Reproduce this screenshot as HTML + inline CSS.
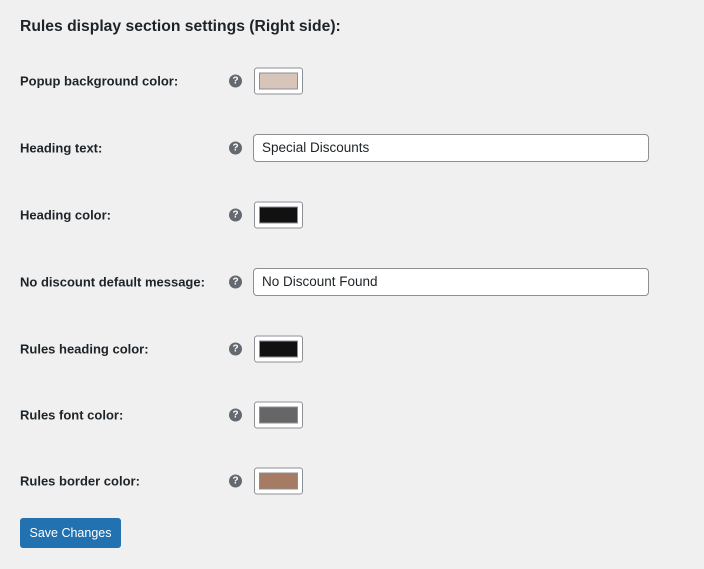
<!DOCTYPE html>
<html><head><style>
body{margin:0;width:704px;height:569px;background:#f0f0f1;font-family:"Liberation Sans",sans-serif;color:#1d2327;position:relative;overflow:hidden}
.t{position:absolute;left:20px;top:18px;font-size:15.7px;font-weight:600}
.l{position:absolute;left:20px;font-size:13px;font-weight:bold;color:#1d2327;transform:translateY(-50%)}
.h{position:absolute;left:229px;width:13px;height:13px;border-radius:50%;background:#646970;color:#fff;font-size:10px;font-weight:bold;text-align:center;line-height:13px;transform:translateY(-50%)}
.c{position:absolute;left:254px;width:47px;height:25px;border:1px solid #8c8f94;border-radius:3px;background:#fff;transform:translateY(-50%)}
.c i{position:absolute;left:4px;top:4px;width:37px;height:15px;border:1px solid #8c8f94}
.in{position:absolute;left:253px;width:386px;height:26px;border:1px solid #8c8f94;border-radius:4px;background:#fff;font-size:13.5px;line-height:26px;padding-left:8px;transform:translateY(-50%)}
.b{position:absolute;left:20px;top:518px;width:101px;height:30px;background:#2271b1;border-radius:3px;color:#fff;font-size:12.5px;text-align:center;line-height:30px}
</style></head><body>
<div class="t">Rules display section settings (Right side):</div>

<div class="l" style="top:81px">Popup background color:</div><div class="h" style="top:81px">?</div><div class="c" style="top:81px"><i style="background:#d7c5b9"></i></div>
<div class="l" style="top:148px">Heading text:</div><div class="h" style="top:148px">?</div><div class="in" style="top:148px">Special Discounts</div>
<div class="l" style="top:215px">Heading color:</div><div class="h" style="top:215px">?</div><div class="c" style="top:215px"><i style="background:#111"></i></div>
<div class="l" style="top:282px">No discount default message:</div><div class="h" style="top:282px">?</div><div class="in" style="top:282px">No Discount Found</div>
<div class="l" style="top:349px">Rules heading color:</div><div class="h" style="top:349px">?</div><div class="c" style="top:349px"><i style="background:#111"></i></div>
<div class="l" style="top:415px">Rules font color:</div><div class="h" style="top:415px">?</div><div class="c" style="top:415px"><i style="background:#666"></i></div>
<div class="l" style="top:481px">Rules border color:</div><div class="h" style="top:481px">?</div><div class="c" style="top:481px"><i style="background:#a57b63"></i></div>

<div class="b">Save Changes</div>
</body></html>
